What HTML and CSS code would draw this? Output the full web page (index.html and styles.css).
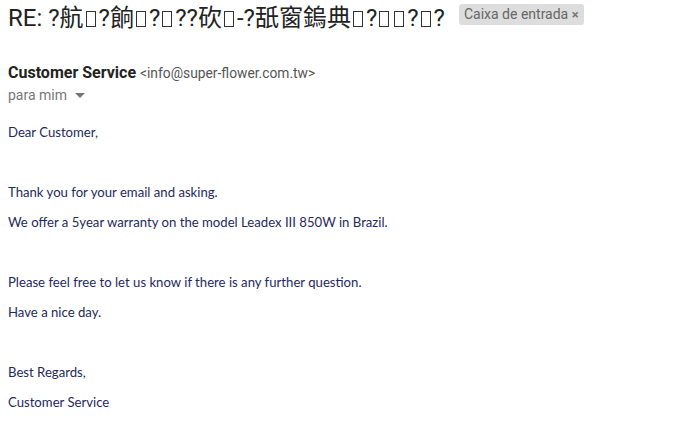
FILE: index.html
```html
<!DOCTYPE html>
<html lang="pt">
<head>
  <meta charset="UTF-8">
  <title>RE: Leadex III 850W</title>
  <link rel="stylesheet" href="styles.css">
</head>
<body>
<div class="mail">
  <div class="subject">
    <h1>RE: ?航<i class="tofu"></i>?餉<i class="tofu"></i>?<i class="tofu"></i>??砍<i class="tofu"></i>-?舐窗鎢典<i class="tofu"></i>?<i class="tofu"></i><i class="tofu"></i>?<i class="tofu"></i>?</h1>
    <span class="label">Caixa de entrada <span class="x">×</span></span>
  </div>

  <div class="sender">
    <b>Customer Service</b> <span class="addr">&lt;info@super-flower.com.tw&gt;</span>
  </div>
  <div class="to">para mim <span class="caret"></span></div>

  <div class="body">
    <p>Dear Customer,</p>
    <p>&nbsp;</p>
    <p>Thank you for your email and asking.</p>
    <p>We offer a 5year warranty on the model Leadex III 850W in Brazil.</p>
    <p>&nbsp;</p>
    <p>Please feel free to let us know if there is any further question.</p>
    <p>Have a nice day.</p>
    <p>&nbsp;</p>
    <p>Best Regards,</p>
    <p>Customer Service</p>
  </div>
</div>
</body>
</html>
```

FILE: styles.css
```css
*{box-sizing:border-box;margin:0;padding:0}
body{background:#fff;font-family:Roboto,Arial,sans-serif;color:#222}
.mail{padding:4px 8px}
.subject{display:flex;align-items:center;gap:14px;height:22px}
.subject h1{font-size:24px;font-weight:400;color:#222;font-family:Roboto,"Noto Sans CJK TC",sans-serif;white-space:nowrap}
.tofu{display:inline-block;width:10px;height:16px;border:1.5px solid #333;margin:0 3px 0 2px;vertical-align:-1px}
.label{background:#ddd;color:#666;font-size:14px;border-radius:3px;padding:2px 5px 2px 5px;line-height:16px;margin-top:-1px}
.label .x{font-size:13px;color:#777;font-weight:700}
.sender{margin-top:38px;font-size:16px;line-height:18px}
.sender b{font-weight:700;color:#222}
.addr{font-size:13.8px;color:#555}
.to{margin-top:5px;font-size:14px;color:#777;line-height:16px;display:flex;align-items:center;gap:6px}
.caret{width:0;height:0;border-left:5px solid transparent;border-right:5px solid transparent;border-top:5px solid #777;margin-left:2px}
.body{margin-top:21px;font-family:Lato,"Open Sans",sans-serif;font-size:13.15px;color:#1f2a5c}
.body p{line-height:17px;margin-bottom:13px}
```
